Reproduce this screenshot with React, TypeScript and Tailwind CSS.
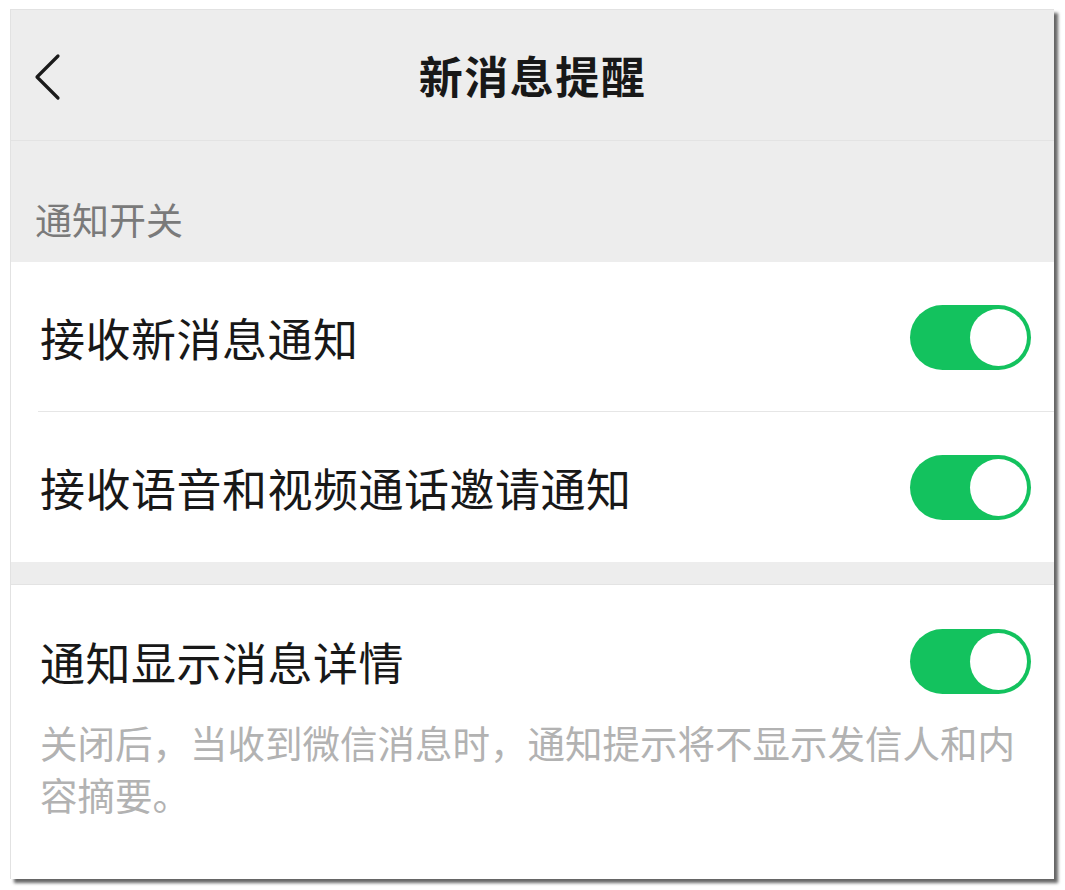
import type { ReactNode } from 'react';

const font = { fontFamily: '"Noto Sans CJK SC", "Noto Sans", sans-serif' };

function Toggle() {
  return (
    <div className="w-[121px] h-[65px] rounded-full bg-[#13c25e] flex items-center justify-end pr-[4px] shrink-0">
      <div className="w-[57px] h-[57px] rounded-full bg-white" />
    </div>
  );
}

function Row({ children, divider }: { children: ReactNode; divider?: boolean }) {
  return (
    <div className="relative h-[150px] flex items-center justify-between pl-[29px] pr-[23px] bg-white">
      <span className="text-[45px] text-[#181818] leading-none tracking-[0.5px]">{children}</span>
      <Toggle />
      {divider && <div className="absolute left-[27px] right-0 bottom-0 h-px bg-[#e6e6e6]" />}
    </div>
  );
}

export default function App() {
  return (
    <div className="w-[1065px] h-[890px] bg-white pt-[9px] pl-[10px]" style={font}>
      <div className="w-[1044px] h-[870px] bg-[#ededed] flex flex-col shadow-[4px_4px_3px_rgba(0,0,0,0.6)] border-t border-l border-[#e2e2e2]">
        {/* header */}
        <div className="relative h-[131px] flex items-center justify-center border-b border-[#e3e3e3]">
          <svg
            className="absolute left-[23px] top-[43px]"
            width="28"
            height="48"
            viewBox="0 0 28 48"
            fill="none"
          >
            <polyline points="24,3 3,24 24,45" stroke="#1a1a1a" strokeWidth="3.2" strokeLinecap="round" strokeLinejoin="round" />
          </svg>
          <h1 className="text-[44px] font-bold text-[#181818] leading-none tracking-[1.5px]">新消息提醒</h1>
        </div>

        {/* section label */}
        <div className="h-[121px] flex items-end pl-[24px] pb-[24px]">
          <span className="text-[37px] text-[#7a7a7a] leading-none">通知开关</span>
        </div>

        <Row divider>接收新消息通知</Row>
        <Row>接收语音和视频通话邀请通知</Row>

        <div className="h-[23px] border-b border-[#e3e3e3]" />

        <div className="flex-1 bg-white">
          <div className="h-[152px] flex items-center justify-between pl-[29px] pr-[23px]">
            <span className="text-[45px] text-[#181818] leading-none tracking-[0.5px]">通知显示消息详情</span>
            <Toggle />
          </div>
          <p className="-mt-[21px] pl-[29px] pr-[24px] text-[37.5px] leading-[52px] text-[#b2b2b2]">
            关闭后，当收到微信消息时，通知提示将不显示发信人和内容摘要。
          </p>
        </div>
      </div>
    </div>
  );
}
